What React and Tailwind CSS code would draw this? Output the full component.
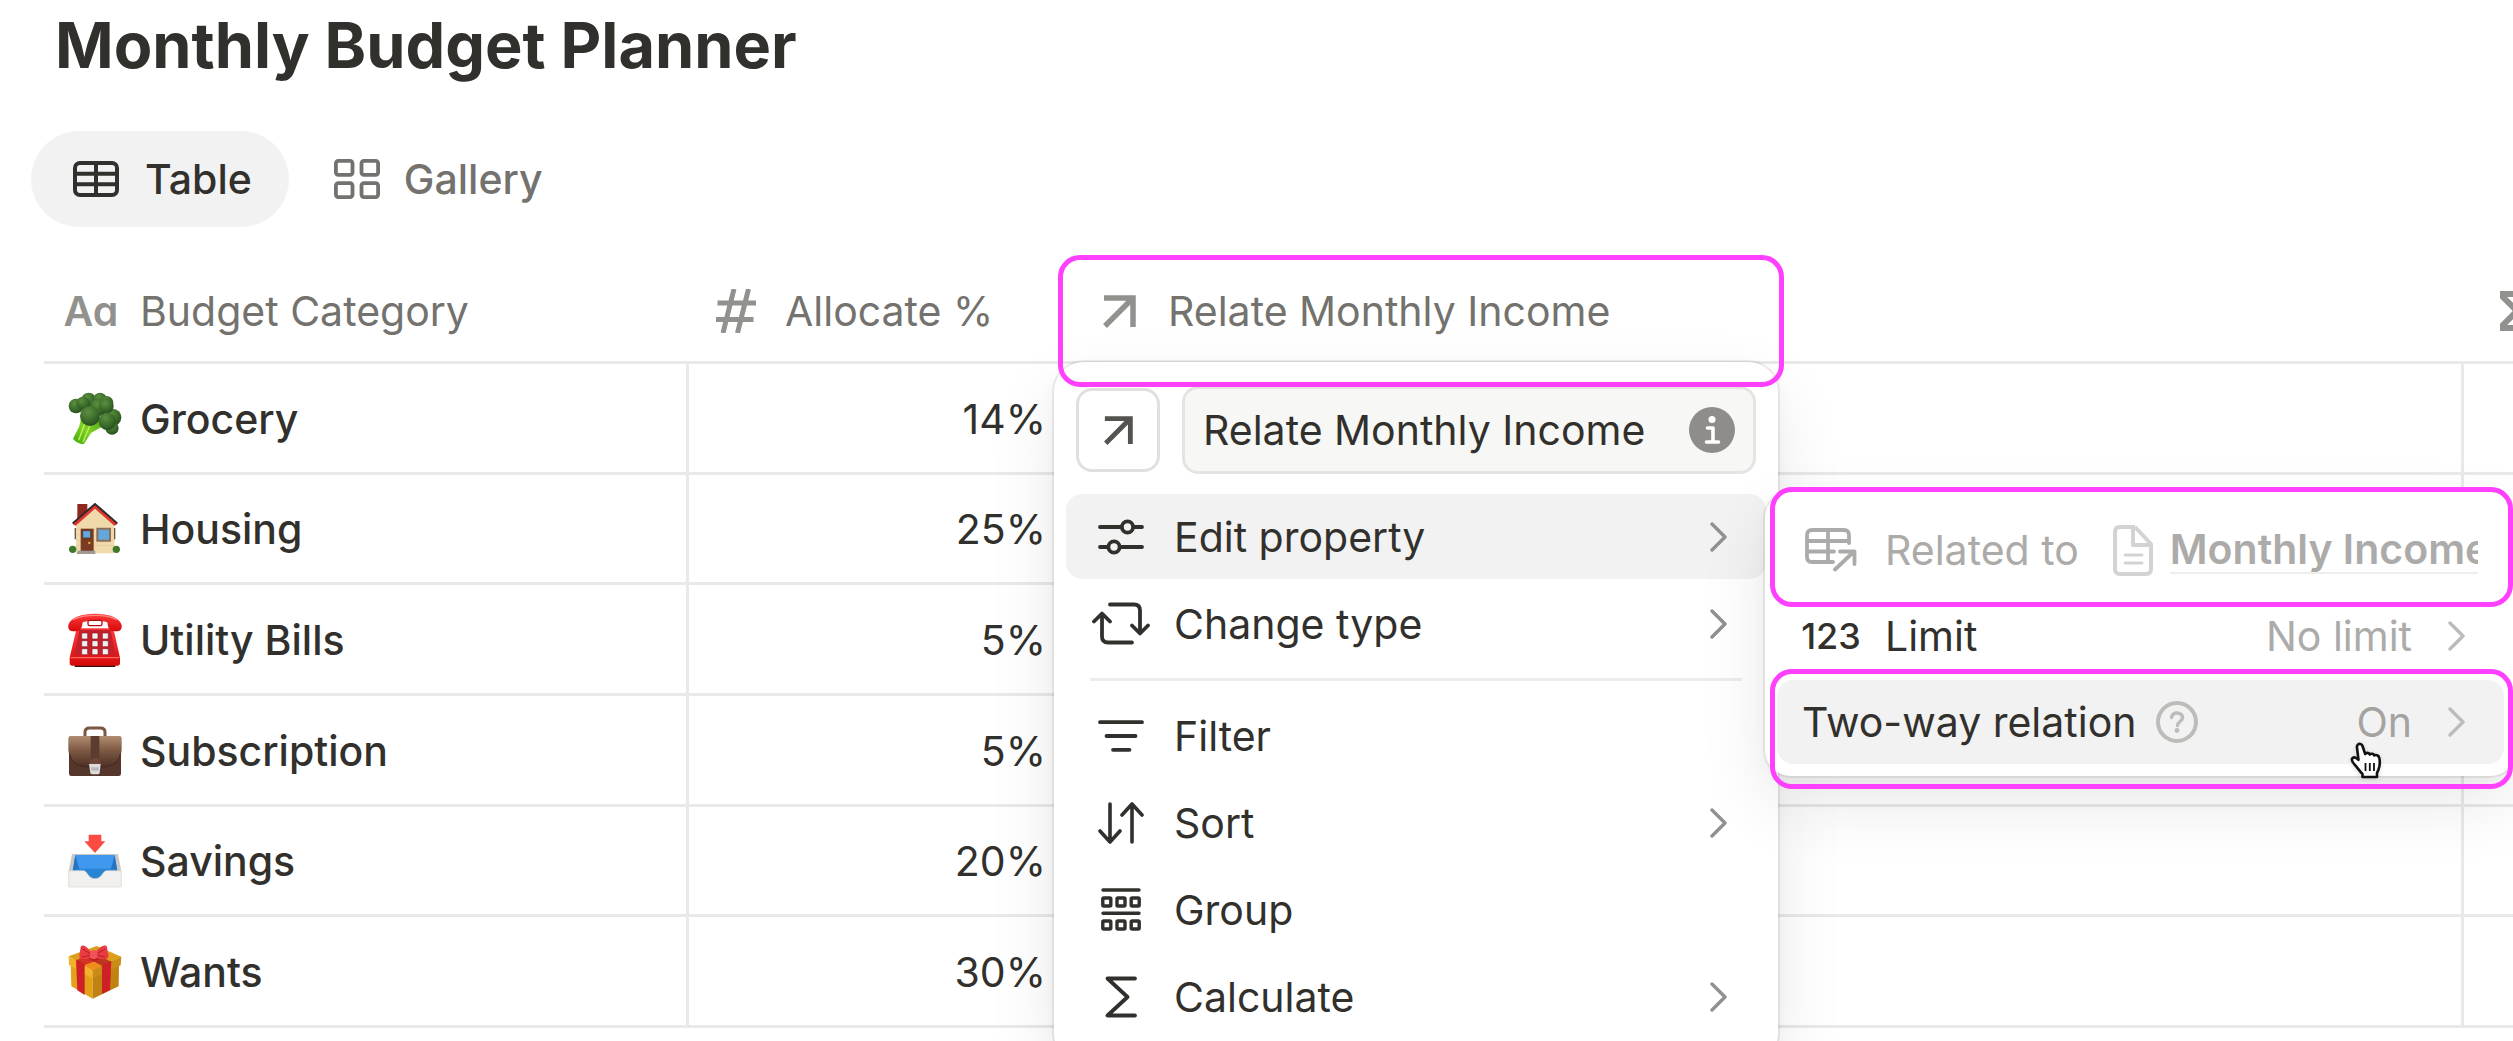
import React from 'react';
import clsx from 'clsx';

/* ---------- Line icons ---------- */

const TableIcon = () => (
  <svg width="46" height="36" viewBox="0 0 46 36" fill="none" stroke="currentColor" strokeWidth="4" className="shrink-0">
    <rect x="2" y="2" width="42" height="32" rx="5" />
    <path d="M2 12.7h42M2 23.3h42M23 2v32" />
  </svg>
);

const GalleryIcon = () => (
  <svg width="46" height="40" viewBox="0 0 46 40" fill="none" stroke="currentColor" strokeWidth="3.8" className="shrink-0">
    <rect x="1.9" y="1.9" width="16.6" height="14" rx="2.5" />
    <rect x="27.5" y="1.9" width="16.6" height="14" rx="2.5" />
    <rect x="1.9" y="24.1" width="16.6" height="14" rx="2.5" />
    <rect x="27.5" y="24.1" width="16.6" height="14" rx="2.5" />
  </svg>
);

const HashIcon = () => (
  <svg width="40" height="44" viewBox="0 0 40 44" fill="none" stroke="currentColor" strokeWidth="5" className="shrink-0">
    <path d="M1.5 14h38.5M0 30.5h37.5M18 0 7 44M32.5 0 21.5 44" />
  </svg>
);

const ArrowIcon = ({ size = 33 }) => (
  <svg width={size} height={size} viewBox="0 0 33 33" fill="none" stroke="currentColor" strokeWidth="5.5" className="shrink-0">
    <path d="M1 3h29v29M29.5 3.5 2 31" />
  </svg>
);

const SigmaBoldIcon = () => (
  <svg width="46" height="40" viewBox="0 0 46 40" fill="none" stroke="currentColor" strokeWidth="6" className="shrink-0">
    <path d="M44 10V3H15v3l14 14-14 14v3h29v-7" />
  </svg>
);

const InfoIcon = () => (
  <svg width="46" height="46" viewBox="0 0 46 46" className="shrink-0">
    <circle cx="23" cy="23" r="23" fill="#8e8d8a" />
    <circle cx="23" cy="12.5" r="3.5" fill="#fff" />
    <path d="M18.5 21h5.500v14M17.5 35h12" fill="none" stroke="#fff" strokeWidth="3.6" strokeLinecap="round" strokeLinejoin="round" />
  </svg>
);

const SlidersIcon = () => (
  <svg width="46" height="36" viewBox="0 0 46 36" fill="none" stroke="currentColor" strokeWidth="3.8" strokeLinecap="round" className="shrink-0">
    <path d="M2 8h21M36 8h8M2 28h8M22 28h22" />
    <circle cx="29.5" cy="8" r="5.6" />
    <circle cx="16" cy="28" r="5.6" />
  </svg>
);

const ChangeTypeIcon = () => (
  <svg width="58" height="43" viewBox="0 0 58 43" fill="none" stroke="currentColor" strokeWidth="3.8" strokeLinecap="round" strokeLinejoin="round" className="shrink-0">
    <path d="M18 2.500h24q6 0 6 6V31M40 23.500l8 8 8-8" />
    <path d="M40 40.500H16q-6 0-6-6V12M2 19.500l8-8 8 8" />
  </svg>
);

const FilterIcon = () => (
  <svg width="46" height="32" viewBox="0 0 46 32" fill="none" stroke="currentColor" strokeWidth="3.8" strokeLinecap="round" className="shrink-0">
    <path d="M2 2.200h42M8.500 16h29M15 29.800h16.500" />
  </svg>
);

const SortIcon = () => (
  <svg width="46" height="42" viewBox="0 0 46 42" fill="none" stroke="currentColor" strokeWidth="3.6" strokeLinecap="round" strokeLinejoin="round" className="shrink-0">
    <path d="M12 2v38M2 29l10 11 10-11M34 40V2M24 13 34 2l10 11" />
  </svg>
);

const GroupIcon = () => (
  <svg width="40" height="43" viewBox="0 0 40 43" fill="none" stroke="currentColor" strokeWidth="3.4" strokeLinecap="round" className="shrink-0">
    <path d="M2 2h36M2 25.300h36" />
    {[1.8, 16, 30.2].map((x) => (
      <g key={x}>
        <rect x={x} y="10" width="8" height="8" rx="1" />
        <rect x={x} y="33" width="8" height="8" rx="1" />
      </g>
    ))}
  </svg>
);

const SigmaIcon = () => (
  <svg width="32" height="42" viewBox="0 0 32 42" fill="none" stroke="currentColor" strokeWidth="3.8" strokeLinecap="round" strokeLinejoin="round" className="shrink-0">
    <path d="M30 2.500H2.500L22.500 21 2.500 39.500H30" />
  </svg>
);

const ChevronIcon = ({ className }) => (
  <svg width="17" height="30" viewBox="0 0 17 30" fill="none" stroke="currentColor" strokeWidth="3.4" strokeLinecap="round" strokeLinejoin="round" className={clsx('shrink-0', className)}>
    <path d="M2 2l13 13L2 28" />
  </svg>
);

const RelatedTableIcon = () => (
  <svg width="52" height="44" viewBox="0 0 52 44" fill="none" stroke="currentColor" strokeWidth="3.8" strokeLinecap="round" strokeLinejoin="round" className="shrink-0">
    <path d="M44 15V7q0-5-5-5H7Q2 2 2 7v22q0 5 5 5h21M2 13h42M2 23.500h27M23 2v32" />
    <path d="M30 41.500 49 23.500M35 23.500h14.500V36" />
  </svg>
);

const PageIcon = () => (
  <svg width="40" height="51" viewBox="0 0 40 51" fill="none" stroke="#d4d3d1" strokeWidth="4" strokeLinejoin="round" className="shrink-0">
    <path d="M22 2H7Q2 2 2 7v37q0 5 5 5h26q5 0 5-5V19L22 2M20 2v18h18" />
    <path d="M12 30h17M12 38h17" strokeWidth="3" strokeLinecap="round" />
  </svg>
);

const HelpIcon = () => (
  <svg width="42" height="42" viewBox="0 0 42 42" fill="none" stroke="#bdbcb8" strokeLinecap="round" className="shrink-0">
    <circle cx="21" cy="21" r="19" strokeWidth="4" />
    <path d="M15.500 16.500c.5-3 2.700-4.500 5.500-4.500 3.200 0 5.600 1.800 5.600 4.600 0 4-5.100 3.800-5.100 7.900" strokeWidth="3.4" />
    <circle cx="21" cy="29.5" r="2.4" fill="#bdbcb8" stroke="none" />
  </svg>
);

const HandCursor = () => (
  <svg width="34" height="38" viewBox="0 0 34 38" className="pointer-events-none absolute top-[61px] left-[573px] drop-shadow-sm">
    <path
      d="M8 3.500c2-1.500 4 0 4.500 1.500l2.700 8c1-1.600 3.800-1.500 4.600.5 1.200-1.300 3.800-1 4.500 1 1.600-1 4.300-.3 5 2.500.8 3.500.5 8-.8 11.500l-1.500 3.500v4H12.500v-3c-3-3-5.500-7-8-9.500-1.700-1.900-3.400-4-2.300-6 1.300-1.900 4-1.200 6.300 1.300L7 6.500c-.2-1.300.1-2.300 1-3z"
      fill="#fff"
      stroke="#111"
      strokeWidth="2.6"
      strokeLinejoin="round"
    />
    <path d="M15.500 22v8M19.800 22v8M24 22v8" stroke="#111" strokeWidth="1.8" />
  </svg>
);

/* ---------- Category pictures ---------- */

const Broccoli = () => (
  <svg width="54" height="54" viewBox="0 0 162 162" className="shrink-0">
    <defs>
      <radialGradient id="leaf" cx="40%" cy="30%" r="75%">
        <stop offset="0" stopColor="#5c8f40" />
        <stop offset=".6" stopColor="#3b6b2a" />
        <stop offset="1" stopColor="#264a1d" />
      </radialGradient>
      <linearGradient id="stem" x1="0" y1="1" x2="1" y2="0">
        <stop offset="0" stopColor="#3fa80c" />
        <stop offset=".5" stopColor="#7ed321" />
        <stop offset="1" stopColor="#4c9a1a" />
      </linearGradient>
    </defs>
    <path d="M40 78 33 105 15 140q10 14 32 17l22-34 38-22-10-20z" fill="url(#stem)" />
    <path d="M50 95 32 145M66 100 45 150" stroke="#c0ee62" strokeWidth="4" fill="none" />
    <g fill="url(#leaf)">
      <circle cx="62" cy="24" r="22" />
      <circle cx="96" cy="22" r="20" />
      <circle cx="116" cy="32" r="20" />
      <circle cx="24" cy="42" r="22" />
      <circle cx="45" cy="34" r="20" />
      <circle cx="92" cy="46" r="26" />
      <circle cx="134" cy="76" r="26" />
      <circle cx="115" cy="42" r="22" />
      <circle cx="132" cy="108" r="20" />
      <circle cx="118" cy="88" r="26" />
      <circle cx="66" cy="72" r="30" />
    </g>
  </svg>
);

const House = () => (
  <svg width="54" height="54" viewBox="0 0 162 162" className="shrink-0">
    <path d="M28 6h30v30L28 58z" fill="#8e2720" />
    <path d="M24 60 81 14l58 46v94H24z" fill="#f0d9ab" />
    <path d="M24 82h115M24 98h115M24 114h115M24 130h115" stroke="#e2c691" strokeWidth="1.5" />
    <path d="M81 2 12 62l7 8 62-54 62 54 7-8z" fill="#2b2b2e" />
    <path d="M81 10 15 67l8 4 58-51 58 51 8-4z" fill="#e0352f" />
    <path d="M38 80h39v74H38z" fill="#7b3b22" />
    <path d="M44 86h24v22H44z" fill="#5fa9df" stroke="#4b2113" strokeWidth="2" />
    <circle cx="64" cy="123" r="3.5" fill="#e9b83a" />
    <path d="M88 80h38v36H88z" fill="#63a8dc" stroke="#8b6f5a" strokeWidth="6" />
    <path d="M22 78v34M140 78v34" stroke="#6b5545" strokeWidth="4" />
    <circle cx="14" cy="142" r="11" fill="#3f7a2a" />
    <circle cx="145" cy="142" r="11" fill="#3f7a2a" />
    <path d="M30 146h52v10H26z" fill="#a09a92" />
  </svg>
);

const KEY_COLUMNS = [41, 72, 103];
const KEY_ROWS = [60, 83, 107];

const Telephone = () => (
  <svg width="54" height="54" viewBox="0 0 162 162" className="shrink-0">
    <defs>
      <linearGradient id="phone" x1="0" y1="0" x2="0" y2="1">
        <stop offset="0" stopColor="#ff3b3b" />
        <stop offset="1" stopColor="#d60909" />
      </linearGradient>
    </defs>
    <path d="M20 154h122v8H20z" fill="#3b1012" />
    <path d="M26 46h110l20 88v16q0 8-8 8H13q-8 0-8-8v-16z" fill="url(#phone)" />
    <path d="M34 50h94l14 76H20z" fill="#c3202b" />
    <path d="M8 134h146" stroke="#ff6a60" strokeWidth="4" />
    <path d="M1 36C8 12 42 2 81 2s73 10 80 34c2 18-10 20-24 18-12 0-17-8-19-26-22-6-52-6-74 0-2 18-7 26-19 26C11 56-1 54 1 36z" fill="url(#phone)" />
    <path d="M14 20Q40 7 81 7t67 13" stroke="#ff8a80" strokeWidth="4" fill="none" />
    <rect x="60" y="22" width="42" height="16" rx="5" fill="#fff" stroke="#b30d12" strokeWidth="4" />
    {KEY_ROWS.map((y) =>
      KEY_COLUMNS.map((x) => (
        <rect key={`${x}-${y}`} x={x} y={y} width="18" height="18" rx="3" fill="#f1f1f1" stroke="#8f1a20" strokeWidth="2" />
      ))
    )}
  </svg>
);

const Briefcase = () => (
  <svg width="54" height="54" viewBox="0 0 162 162" className="shrink-0">
    <defs>
      <linearGradient id="leather" x1="0" y1="0" x2="0" y2="1">
        <stop offset="0" stopColor="#b08d70" />
        <stop offset=".45" stopColor="#7f5a45" />
        <stop offset="1" stopColor="#4c2f25" />
      </linearGradient>
    </defs>
    <path d="M51 36V24q0-12 14-12h32q14 0 14 12v12" fill="none" stroke="#7b5643" strokeWidth="9" />
    <rect x="3" y="36" width="156" height="120" rx="7" fill="#54362b" />
    <path d="M9 36h144q8 0 8 8v34q-4 46-52 51H53Q5 124 1 78V44q0-8 8-8z" fill="url(#leather)" />
    <path d="M4 88q8 38 50 41h54q42-3 50-41" fill="none" stroke="#432920" strokeWidth="3" />
    <path d="M68 36h26v72H68z" fill="#5b3c2e" />
    <path d="M64 118q0-16 17-16t17 16v8H64z" fill="#6d4637" />
    <path d="M63 120h35l-3 27q-1 4-6 4H73q-5 0-6-4z" fill="#dcdcdc" />
    <path d="M70 130h22v10H70z" fill="#b9b9bb" />
  </svg>
);

const InboxTray = () => (
  <svg width="54" height="54" viewBox="0 0 162 162" className="shrink-0">
    <path d="M62 2h38v20h12L81 57 49 22h13z" fill="#fb4b43" />
    <path d="M12 60h138l10 52H2z" fill="#c9c8c6" />
    <path d="M22 63h118l8 48H14z" fill="#3f97ee" />
    <path d="M22 63 14 111h22l-6-18zM140 63l8 48h-22l6-18z" fill="#2375c4" />
    <path d="M24 104h114l8 10-48 25H64l-48-25z" fill="#2a84d4" />
    <path d="M2 110h44c12 0 14 24 35 24s23-24 35-24h44v46q0 3-3 3H5q-3 0-3-3z" fill="#f1f0ee" stroke="#d6d4d2" strokeWidth="2" />
  </svg>
);

const Gift = () => (
  <svg width="54" height="54" viewBox="0 0 162 162" className="shrink-0">
    <path d="M8 58 74 88v73L10 124z" fill="#e3a019" />
    <path d="M153 58 74 88v73l78-37z" fill="#c08212" />
    <path d="M2 34 86 3l74 32-86 46z" fill="#dd9f1b" />
    <path d="M2 34 74 76v25L3 60z" fill="#f2b32a" />
    <path d="M160 35 74 76v25l84-40z" fill="#c98c17" />
    <path d="m24 44 26 14v92l-22-14zM130 48l-28 15v84l24-12z" fill="#cf2027" />
    <path d="m24 46 70-28 30 11-74 34z" fill="#cf2027" opacity=".85" />
    <path d="m130 50-68-32-24 9 64 37z" fill="#b81c22" opacity=".8" />
    <path d="M50 60 74 76l28-14-26-12z" fill="#f08c1c" />
    <path d="M74 28C58 2 42-4 38 6c-1 14-6 24-3 34 12 6 28 2 39-6zM78 28C94 2 114-4 117 6c1 14 6 24 3 34-12 6-31 2-42-6z" fill="#ea3b42" />
    <path d="M44 12 70 28M42 36l28-6M112 12 82 28M112 36l-28-6" stroke="#b81c22" strokeWidth="3" />
    <rect x="66" y="16" width="22" height="26" rx="9" fill="#f0525a" />
  </svg>
);

/* ---------- Data ---------- */

const rows = [
  { name: 'Grocery', share: '14%', picture: <Broccoli /> },
  { name: 'Housing', share: '25%', picture: <House /> },
  { name: 'Utility Bills', share: '5%', picture: <Telephone /> },
  { name: 'Subscription', share: '5%', picture: <Briefcase /> },
  { name: 'Savings', share: '20%', picture: <InboxTray /> },
  { name: 'Wants', share: '30%', picture: <Gift /> },
];

const viewItems = [
  { label: 'Filter', icon: <FilterIcon /> },
  { label: 'Sort', icon: <SortIcon />, more: true },
  { label: 'Group', icon: <GroupIcon /> },
  { label: 'Calculate', icon: <SigmaIcon />, more: true },
];

/* ---------- Parts ---------- */

function Highlight({ className }) {
  return (
    <span
      aria-hidden="true"
      className={clsx('pointer-events-none absolute rounded-[22px] border-[5px] border-[#ff40ff]', className)}
    />
  );
}

function ColumnHeader({ icon, children }) {
  return (
    <div className="flex items-center gap-[26px] pl-6 whitespace-nowrap">
      <span className="flex w-[46px] shrink-0 justify-center text-[#91918e]">{icon}</span>
      {children}
    </div>
  );
}

function MenuItem({ icon, label, more, active }) {
  return (
    <button
      type="button"
      className={clsx('flex h-[85px] w-full items-center rounded-2xl pr-[39px] pl-8 text-left', active && 'bg-[#f2f2f2]')}
    >
      <span className="mr-[30px] flex w-[46px] shrink-0 justify-center">{icon}</span>
      <span className="flex-1">{label}</span>
      {more && <ChevronIcon className="text-[#91918e]" />}
    </button>
  );
}

const panel =
  'bg-white shadow-[0_0_0_2px_rgba(84,72,49,0.09),0_6px_16px_rgba(0,0,0,0.04),0_28px_70px_rgba(0,0,0,0.09)]';

function RelationMenu() {
  return (
    <div className={clsx('absolute top-[130px] left-[711px] w-[751px] rounded-[26px] px-3 pt-4 pb-3', panel)}>
      <ul className="flex flex-col gap-0.5">
        <li className="relative flex h-21 items-center pr-[26px] pl-[25px] text-[#acaba9]">
          <span className="mr-[25px] flex w-[58px] shrink-0 justify-center">
            <RelatedTableIcon />
          </span>
          <span className="mr-[34px] whitespace-nowrap">Related to</span>
          <PageIcon />
          <a href="#monthly-income" className="ml-[17px] flex-1 overflow-hidden border-b-2 border-[#eeeeec] leading-[46px] font-semibold whitespace-nowrap">
            Monthly Income
          </a>
          <Highlight className="top-[-21px] left-[-7px] h-[120px] w-[743px]" />
        </li>
        <li>
          <button type="button" className="flex h-21 w-full items-center pr-[39px] pl-[25px] text-left">
            <span className="mr-[25px] flex w-[58px] shrink-0 justify-center text-[36px] font-medium">123</span>
            <span className="flex-1">Limit</span>
            <span className="mr-9 text-[#acaba9]">No limit</span>
            <ChevronIcon className="text-[#bdbcb8]" />
          </button>
        </li>
        <li className="relative">
          <button type="button" className="flex h-21 w-full items-center rounded-2xl bg-[#f2f2f2] pr-[39px] pl-[25px] text-left">
            <span className="mr-5">Two-way relation</span>
            <HelpIcon />
            <span className="mr-9 ml-auto text-[#a4a3a0]">On</span>
            <ChevronIcon className="text-[#bdbcb8]" />
          </button>
          <Highlight className="top-[-11px] left-[-7px] h-[120px] w-[743px]" />
          <HandCursor />
        </li>
      </ul>
    </div>
  );
}

function PropertyMenu() {
  return (
    <div className={clsx('absolute top-[101px] left-[-18px] w-[724px] rounded-[30px] pt-6 pb-6 text-left text-[#32302c]', panel)}>
      <div className="mb-5 flex items-center gap-[22px] px-[22px]">
        <button type="button" aria-label="Property icon" className="flex size-[84px] items-center justify-center rounded-2xl border-[3px] border-[#e1e0de] text-[#55534e]">
          <ArrowIcon size={29} />
        </button>
        <label className="flex h-[88px] flex-1 items-center rounded-2xl border-[3px] border-[#e4e4e2] bg-[#f7f7f5] pr-[18px] pl-[18px]">
          <input aria-label="Property name" defaultValue="Relate Monthly Income" className="w-0 flex-1 bg-transparent outline-none" />
          <InfoIcon />
        </label>
      </div>
      <div className="flex flex-col gap-0.5 px-3">
        <MenuItem icon={<SlidersIcon />} label="Edit property" more active />
        <MenuItem icon={<ChangeTypeIcon />} label="Change type" more />
      </div>
      <hr className="mx-9 my-3 border-t-[3px] border-[#ececeb]" />
      <div className="flex flex-col gap-0.5 px-3">
        {viewItems.map((item) => (
          <MenuItem key={item.label} {...item} />
        ))}
      </div>
      <RelationMenu />
    </div>
  );
}

const cell = 'border-b-[3px] border-[#e9e9e8] p-0';

export default function App() {
  return (
    <main className="h-screen overflow-hidden bg-white font-[Inter,'Liberation_Sans',sans-serif] text-[41px] leading-[54px] text-[#32302c]">
      <h1 className="pl-[55px] text-[63px] leading-[90px] font-bold">Monthly Budget Planner</h1>

      <div role="tablist" className="mt-[41px] flex gap-[3px] pl-[31px] font-medium">
        <button type="button" role="tab" aria-selected="true" className="flex h-24 items-center gap-[26px] rounded-full bg-[#f2f2f2] pr-[37px] pl-[42px]">
          <TableIcon />
          Table
        </button>
        <button type="button" role="tab" aria-selected="false" className="flex h-24 items-center gap-6 rounded-full px-[42px] text-[#73726e]">
          <GalleryIcon />
          Gallery
        </button>
      </div>

      <div className="mt-[34px] pl-11">
        <table className="h-[767px] w-full table-fixed border-separate border-spacing-0">
          <colgroup>
            <col className="w-[645px]" />
            <col className="w-[383px]" />
            <col />
            <col className="w-[49px]" />
          </colgroup>
          <thead className="text-left text-[#73726e]">
            <tr className="h-[103px]">
              <th className={clsx(cell, 'font-normal')}>
                <ColumnHeader icon={<span className="font-semibold [font-feature-settings:'cv11']">Aa</span>}>Budget Category</ColumnHeader>
              </th>
              <th className={clsx(cell, 'font-normal')}>
                <ColumnHeader icon={<HashIcon />}>Allocate %</ColumnHeader>
              </th>
              <th className={clsx(cell, 'relative z-10 font-normal')}>
                <ColumnHeader icon={<ArrowIcon />}>Relate Monthly Income</ColumnHeader>
                <PropertyMenu />
                <Highlight className="top-[-6px] left-[-14px] h-[132px] w-[726px]" />
              </th>
              <th className={clsx(cell, 'font-normal')}>
                <ColumnHeader icon={<SigmaBoldIcon />} />
              </th>
            </tr>
          </thead>
          <tbody>
            {rows.map((row) => (
              <tr key={row.name}>
                <td className={clsx(cell, 'border-r-[3px]')}>
                  <div className="flex items-center gap-[18px] pt-0.5 pl-6 font-medium">
                    {row.picture}
                    {row.name}
                  </div>
                </td>
                <td className={clsx(cell, 'pt-0.5 pr-[26px] text-right')}>{row.share}</td>
                <td className={clsx(cell, 'border-r-[3px]')} />
                <td className={cell} />
              </tr>
            ))}
          </tbody>
        </table>
      </div>
    </main>
  );
}
